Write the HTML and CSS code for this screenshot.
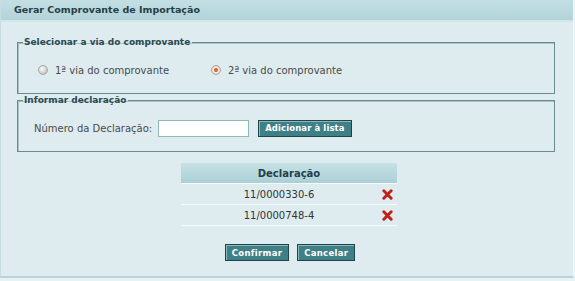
FILE: index.html
```html
<!DOCTYPE html>
<html lang="pt-BR">

<head>
  <meta charset="UTF-8">
  <title>Gerar Comprovante de Importação</title>
  <link rel="stylesheet" href="styles.css">
</head>

<body>
  <div class='panel'>
    <div class='panel-header'>Gerar Comprovante de Importação</div>
    <div class='panel-body'>
      <fieldset class='box'>
        <legend>Selecionar a via do comprovante</legend>
        <div class='radios'>
          <label class='opt'><input type='radio' name='via'> 1ª via do comprovante</label>
          <label class='opt'><input type='radio' name='via' checked> 2ª via do comprovante</label>
        </div>
      </fieldset>
      <fieldset class='box'>
        <legend>Informar declaração</legend>
        <div class='row'>
          <span>Número da Declaração:</span>
          <input type='text' class='field'>
          <button class='btn'>Adicionar à lista</button>
        </div>
      </fieldset>

      <table class='grid'>
        <thead>
          <tr><th colspan='2'>Declaração</th></tr>
        </thead>
        <tbody>
          <tr>
            <td>11/0000330-6</td>
            <td class='icon-col'><svg width="11" height="11" viewBox="0 0 12 12"><path d="M2 2L10 10M10 2L2 10" stroke="#c21d17" stroke-width="3.2" stroke-linecap="round"/></svg></td>
          </tr>
          <tr>
            <td>11/0000748-4</td>
            <td class='icon-col'><svg width="11" height="11" viewBox="0 0 12 12"><path d="M2 2L10 10M10 2L2 10" stroke="#c21d17" stroke-width="3.2" stroke-linecap="round"/></svg></td>
          </tr>
        </tbody>
      </table>

      <div class='actions'>
        <button class='btn'>Confirmar</button>
        <button class='btn'>Cancelar</button>
      </div>
    </div>
  </div>
</body>
</html>
```

FILE: styles.css
```css
body {
  margin: 0;
  background: #e6f2f4;
  font-family: "DejaVu Sans", Verdana, sans-serif;
  font-size: 10px;
  color: #3a3a3a;
}
.panel {
  width: 572px;
  height: 276px;
  background: #deecf0;
  border-left: 1px solid #c8dde2;
  border-right: 1px solid #f2f9fa;
  border-bottom: 2px solid #b9d3d8;
}
.panel-header {
  height: 20px;
  line-height: 20px;
  padding-left: 13px;
  font-size: 9.5px;
  font-weight: bold;
  color: #263e43;
  background: linear-gradient(#c3dfe4, #b2d3d9);
  border-bottom: 2px solid #d2e6ea;
}
.panel-body {
  padding: 15px 16px 0 16px;
}
.box {
  margin: 0 0 1px 0;
  padding: 0;
  width: 536px;
  border: 1px solid #6b8a8a;
  box-shadow: inset 1px 1px 0 #a9c1c3;
}
.box legend {
  margin-left: 5px;
  padding: 0 2px 0 1px;
  font-size: 9px;
  font-weight: bold;
  color: #2b4a50;
}
.radios {
  display: flex;
  align-items: center;
  padding-left: 20px;
  height: 46px;
}
.opt {
  display: flex;
  align-items: center;
  gap: 7px;
  color: #4a4a4a;
}
.opt + .opt {
  margin-left: 42px;
}
.opt input {
  appearance: none;
  -webkit-appearance: none;
  box-sizing: border-box;
  margin: 0;
  width: 10px;
  height: 10px;
  border-radius: 50%;
  border: 1px solid #a7a7a7;
  background: radial-gradient(circle at 40% 35%, #fdfdfd, #c8c8c8 70%, #b3b3b3);
}
.opt input:checked {
  border-color: #b0a498;
  background: radial-gradient(circle, #d9541d 0, #e2702e 30%, #f8efe6 42%, #ddd6cf 75%, #c0b6ad);
}
.row {
  display: flex;
  align-items: center;
  padding-left: 16px;
  height: 46px;
  color: #4a4a4a;
}
.field {
  box-sizing: border-box;
  margin: 0 9px 0 6px;
  width: 91px;
  height: 17px;
  padding: 0;
  border: 1px solid #8fb8bd;
  background: #fff;
}
.btn {
  font-family: "DejaVu Sans", Verdana, sans-serif;
  font-size: 8.5px;
  font-weight: bold;
  letter-spacing: 0.3px;
  color: #fff;
  background: #3f8087;
  border: 1px solid #1e4449;
  box-shadow: inset 1px 1px 0 #8ab9be;
  padding: 0 6px;
  height: 17px;
  line-height: 14px;
}
.row .btn {
  letter-spacing: 0.1px;
  padding: 0 6px;
}
.grid {
  margin: 11px 0 0 164px;
  width: 216px;
  border-collapse: collapse;
}
.grid th {
  height: 20px;
  padding: 0;
  font-weight: bold;
  color: #233f48;
  background: linear-gradient(#c6e1e6, #abcfd6);
  border-bottom: 1px solid #f4fafb;
}
.grid td {
  height: 20px;
  padding: 0;
  text-align: center;
  color: #333;
  border-bottom: 1px solid #f4fafb;
}
.grid .icon-col {
  width: 20px;
}
.grid td.icon-col svg {
  display: block;
  margin: 0 auto;
}
.actions {
  display: flex;
  justify-content: center;
  gap: 8px;
  margin: 18px 0 0 6px;
}
```
